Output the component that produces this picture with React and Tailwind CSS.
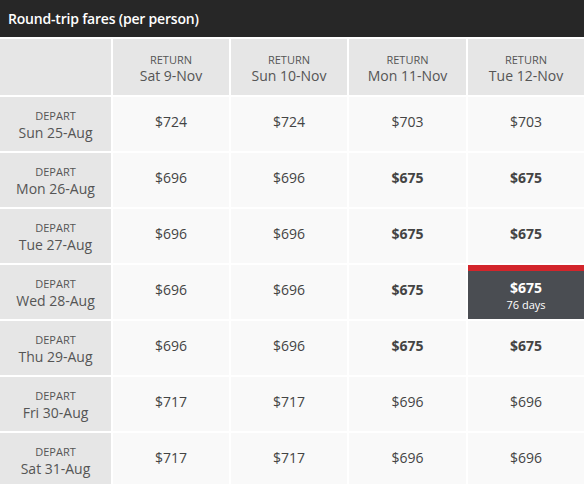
const returns = ['Sat 9-Nov', 'Sun 10-Nov', 'Mon 11-Nov', 'Tue 12-Nov']

const rows = [
  { date: 'Sun 25-Aug', prices: ['$724', '$724', '$703', '$703'] },
  { date: 'Mon 26-Aug', prices: ['$696', '$696', '$675', '$675'], bold: [2, 3] },
  { date: 'Tue 27-Aug', prices: ['$696', '$696', '$675', '$675'], bold: [2, 3] },
  { date: 'Wed 28-Aug', prices: ['$696', '$696', '$675', '$675'], bold: [2], selected: 3 },
  { date: 'Thu 29-Aug', prices: ['$696', '$696', '$675', '$675'], bold: [2, 3] },
  { date: 'Fri 30-Aug', prices: ['$717', '$717', '$696', '$696'] },
  { date: 'Sat 31-Aug', prices: ['$717', '$717', '$696', '$696'] },
]

export default function App() {
  return (
    <div className="w-[584px] h-[484px] overflow-hidden bg-white font-['Open_Sans',sans-serif]">
      <div className="h-[37px] bg-[#272727] px-[8px] flex items-center">
        <h1 className="text-white text-[14px] font-semibold tracking-[-0.2px]">Round-trip fares (per person)</h1>
      </div>
      <div className="mt-[2px] grid grid-cols-[111px_116px_116px_117px_116px] gap-[2px]">
        <div className="h-[56px] bg-[#e6e6e6]" />
        {returns.map((d) => (
          <div key={d} className="h-[56px] pt-[4px] bg-[#e6e6e6] flex flex-col items-center justify-center text-[#555]">
            <span className="text-[11px] leading-[14px] uppercase">Return</span>
            <span className="text-[14px] leading-[18px]">{d}</span>
          </div>
        ))}
        {rows.map((r) => (
          <Row key={r.date} row={r} />
        ))}
      </div>
    </div>
  )
}

function Row({ row }) {
  return (
    <>
      <div className="h-[54px] pt-[3px] bg-[#e6e6e6] flex flex-col items-center justify-center text-[#555]">
        <span className="text-[11px] leading-[14px] uppercase">Depart</span>
        <span className="text-[14px] leading-[19px]">{row.date}</span>
      </div>
      {row.prices.map((p, i) =>
        row.selected === i ? (
          <div key={i} className="h-[54px] flex flex-col">
            <div className="h-[6px] bg-[#d3252b]" />
            <div className="flex-1 bg-[#4a4d52] flex flex-col items-center justify-center text-white">
              <span className="text-[14px] leading-[19px] font-bold">{p}</span>
              <span className="text-[11px] leading-[15px]">76 days</span>
            </div>
          </div>
        ) : (
          <div
            key={i}
            className={`h-[54px] bg-[#f9f9f9] flex items-center justify-center pb-[5px] text-[14px] text-[#444] ${
              row.bold && row.bold.includes(i) ? 'font-bold' : ''
            }`}
          >
            {p}
          </div>
        )
      )}
    </>
  )
}
